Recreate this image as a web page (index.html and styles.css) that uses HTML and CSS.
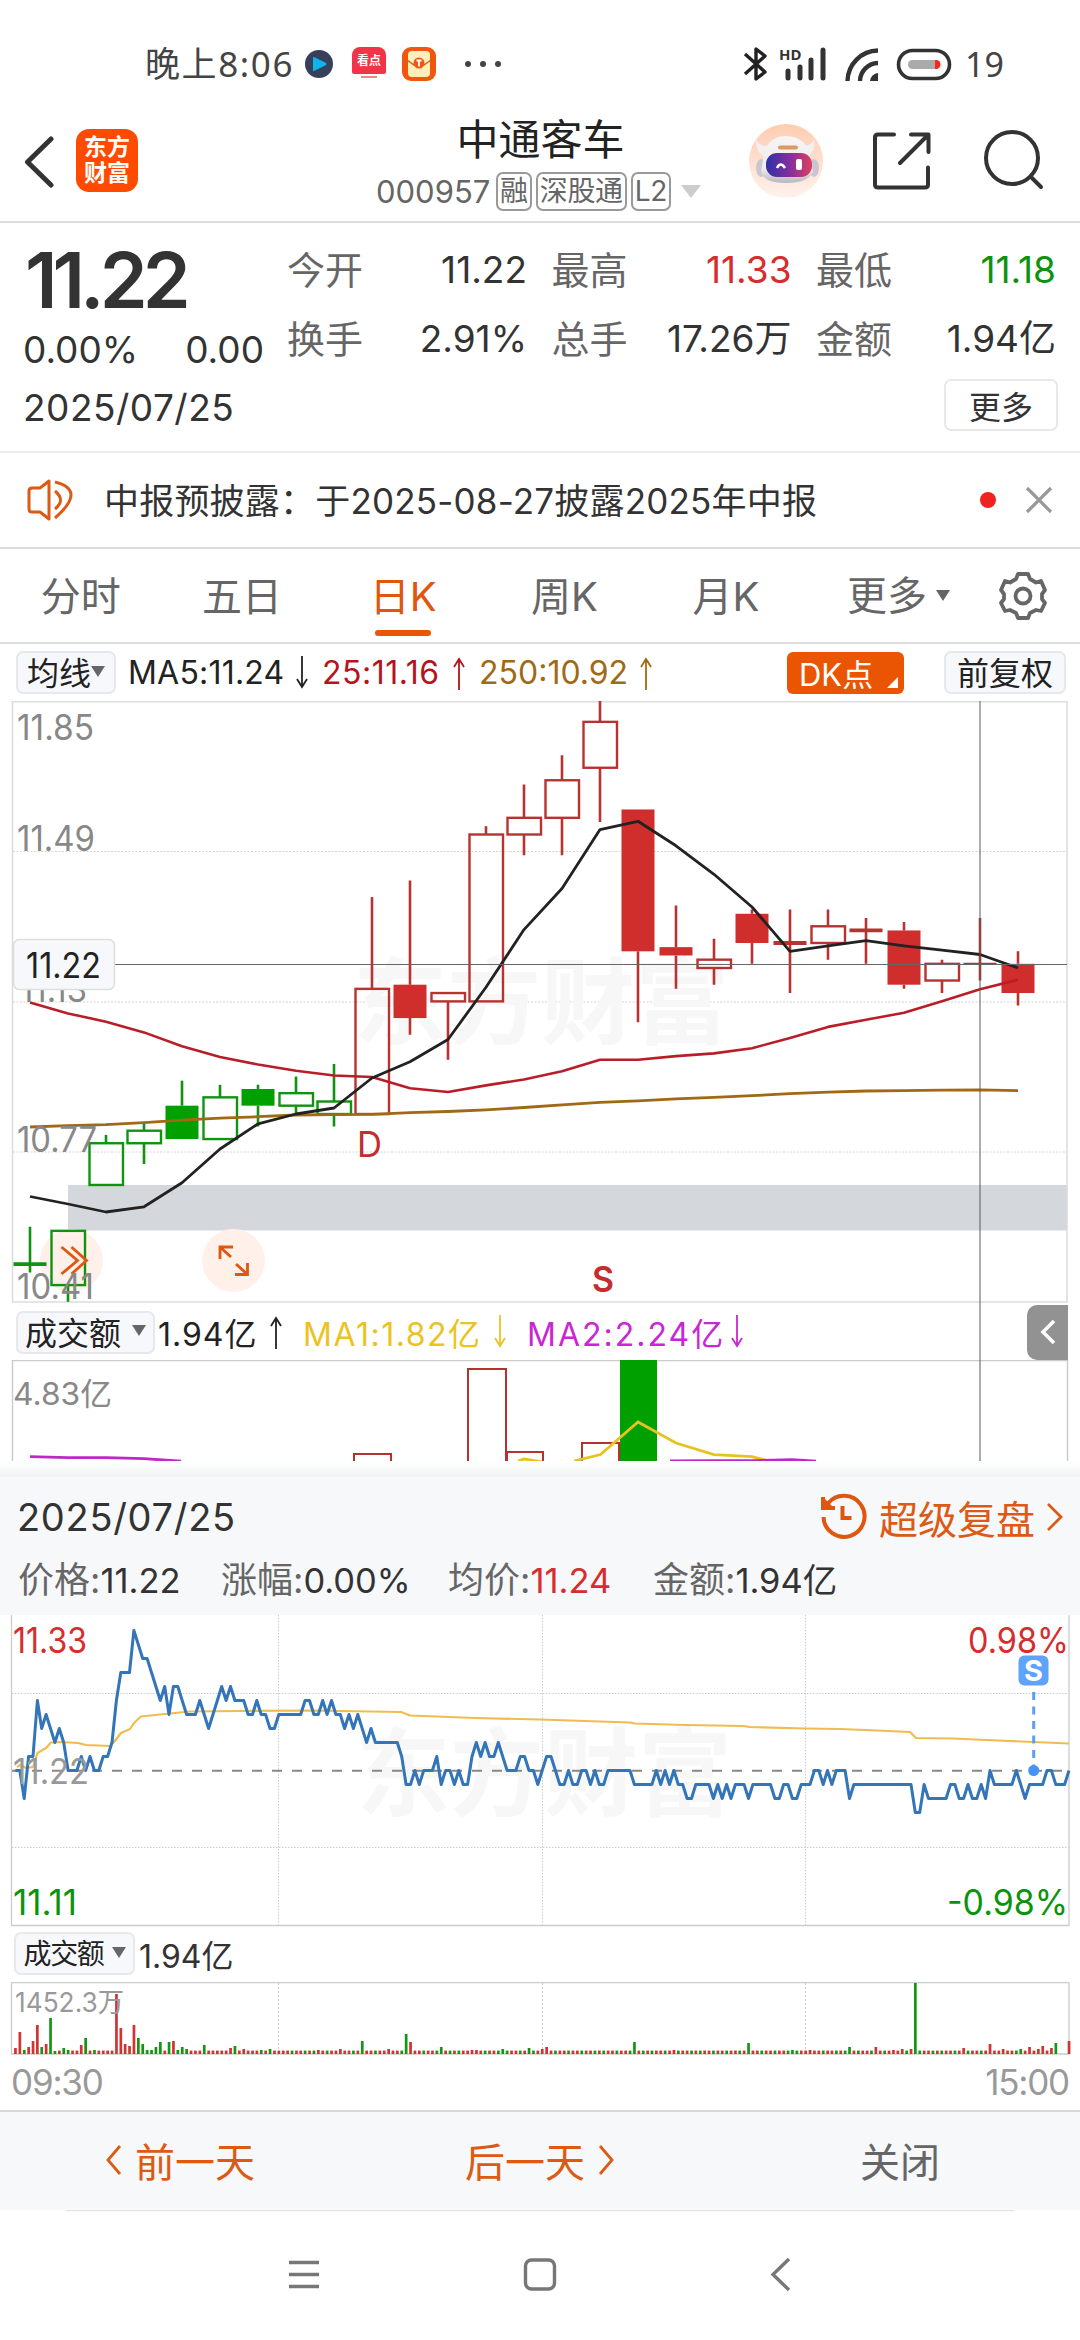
FILE: index.html
```html
<!DOCTYPE html>
<html lang="zh-CN">
<head>
    <meta charset="UTF-8">
    <meta name="viewport" content="width=device-width, initial-scale=1.0">
    <title>中通客车 000957</title>
    <link rel="stylesheet" href="styles.css">
</head>
<body>
    <div class="status-bar">
        <span class="time">晚上8:06</span>
        <svg class="app-play" width="28" height="28" viewBox="0 0 28 28"><circle cx="14" cy="14" r="14" fill="#37405a"/><path d="M8 7.500v13q0 1 1 .6l12-6.200q1-.9 0-1.800L9 7q-1-.4-1 .5z" fill="#10b4ec"/></svg>
        <span class="app-news"><b>看点</b><i></i></span>
        <svg class="app-mail" width="34" height="34" viewBox="0 0 34 34"><rect width="34" height="34" rx="9" fill="#f0560e"/><rect x="6" y="4" width="22" height="26" rx="4" fill="#ffeebb"/><path d="M5 13l7 5h10l7-5" fill="none" stroke="#c8641e" stroke-width="1.5"/><circle cx="17" cy="16" r="5.5" fill="#f0560e"/><path d="M14.5 13.5h5M17 13.5v6" stroke="#fff" stroke-width="1.8"/></svg>
        <span class="dots"><i></i><i></i><i></i></span>
        <svg class="system" width="230" height="40" viewBox="740 44 230 40">
            <path d="M744 54l20 18-9 7V49l9 7-20 18" fill="none" stroke="#222" stroke-width="3.4" stroke-linejoin="round"/>
            <text x="778" y="60" class="hd">HD</text>
            <path d="M787 71v7M799 67v11M810 60v18M822 50v28" stroke="#333" stroke-width="5" stroke-linecap="round"/>
            <g fill="none" stroke="#333" stroke-width="4.4"><path d="M846.500 81A31 31 0 0 1 877 50.500"/><path d="M859 81A18.500 18.500 0 0 1 877 63"/></g>
            <path d="M869 81a9 9 0 0 1 8-8v8z" fill="#333"/>
            <rect x="897.500" y="50.500" width="51" height="28" rx="14" fill="none" stroke="#333" stroke-width="3.6"/>
            <rect x="907" y="60" width="32" height="9" rx="4.500" fill="#aaa"/>
            <path d="M934 60h1a4.500 4.500 0 0 1 0 9h-1z" fill="#f22"/>
        </svg>
        <span class="battery">19</span>
    </div>

    <header>
        <div class="header-left">
            <svg width="30" height="52" viewBox="0 0 30 52"><path d="M27 3L3.500 26 27 49" fill="none" stroke="#333" stroke-width="5" stroke-linecap="round" stroke-linejoin="round"/></svg>
            <div class="logo">东方<br>财富</div>
        </div>
        <div class="header-title">
            <h1>中通客车</h1>
            <div class="stock-code"><span class="code">000957</span><i>融</i><i>深股通</i><i>L2</i><b class="triangle big"></b></div>
        </div>
        <svg class="header-icons" width="310" height="80" viewBox="740 120 310 80">
            <defs>
                <linearGradient id="peach" x1="0" y1="0" x2="0" y2="1"><stop offset="0" stop-color="#ffccb2"/><stop offset="1" stop-color="#fff2ec"/></linearGradient>
                <linearGradient id="visor"><stop offset="0" stop-color="#3030a8"/><stop offset=".55" stop-color="#8a2f9c"/><stop offset="1" stop-color="#e0405c"/></linearGradient>
                <linearGradient id="shell" x1="0" y1="0" x2="0" y2="1"><stop offset="0" stop-color="#f8f5f5"/><stop offset=".7" stop-color="#eeebee"/><stop offset="1" stop-color="#b9b5bd"/></linearGradient>
            </defs>
            <circle cx="786" cy="161" r="37" fill="url(#peach)"/>
            <path d="M756 139q2 7 12 7l-5 10q-8-6-7-17zM814 139q-2 7-11 7l5 10q8-6 6-17z" fill="#f3f0f2"/>
            <ellipse cx="761" cy="168" rx="5" ry="9" fill="#c9c6d2"/><ellipse cx="814" cy="168" rx="5" ry="9" fill="#c9c6d2"/>
            <path d="M763 160q2-23 22-24 23 0 26 24l2 12q-5 11-27 11t-25-11z" fill="url(#shell)"/>
            <rect x="778" y="145.500" width="20" height="4" rx="2" fill="#dc9a62"/>
            <rect x="766" y="153" width="46" height="24" rx="11" fill="url(#visor)"/>
            <path d="M777 168q3.500-7 8 0" fill="none" stroke="#fff" stroke-width="2.500"/><rect x="796" y="159" width="6" height="11" rx="2" fill="#fff"/>
            <g fill="none" stroke="#333" stroke-width="4" stroke-linecap="round" stroke-linejoin="round">
                <path d="M894 134.500h-16q-3 0-3 3v47q0 3 3 3h47q3 0 3-3v-17M911 134.500h17.500V152M900 163l28-28"/>
                <circle cx="1012" cy="158" r="26"/><path d="M1031 177l10 10"/>
            </g>
        </svg>
    </header>

    <section class="quote">
        <div class="price-box">
            <div class="price">11.22</div>
            <div class="change"><span>0.00%</span><span>0.00</span></div>
            <div class="date">2025/07/25</div>
        </div>
        <div class="quote-right">
            <div class="quote-grid">
                <div><label>今开</label><span>11.22</span></div>
                <div><label>最高</label><span class="red">11.33</span></div>
                <div><label>最低</label><span class="green">11.18</span></div>
                <div><label>换手</label><span>2.91%</span></div>
                <div><label>总手</label><span>17.26万</span></div>
                <div><label>金额</label><span>1.94亿</span></div>
            </div>
            <button class="more-button">更多</button>
        </div>
    </section>

    <section class="notice">
        <svg width="48" height="42" viewBox="0 0 48 42" fill="none" stroke="#dc5a14" stroke-width="3"><path d="M22 2v38l-9-7H5q-3 0-3-3V12q0-3 3-3h8z" stroke-linejoin="round"/><path d="M28 12q11 9 0 18M28 3q32 8 0 36"/></svg>
        <span class="notice-text">中报预披露：于2025-08-27披露2025年中报</span>
        <i class="red-dot"></i>
        <svg width="28" height="28" viewBox="0 0 28 28"><path d="M2 2l24 24M26 2L2 26" stroke="#999" stroke-width="3.200"/></svg>
    </section>

    <nav class="tabs">
        <a>分时</a>
        <a>五日</a>
        <a class="active">日K</a>
        <a>周K</a>
        <a>月K</a>
        <a class="tab-more">更多<b class="triangle"></b></a>
        <svg width="50" height="50" viewBox="-25 -25 50 50" fill="none" stroke="#666" stroke-width="3.800" stroke-linejoin="round"><path d="M-5-22H5L7-17 13-13.500 18-15 22-6 19-2V3L22 7 18 15 13 14 7 17 5 22H-5L-7 17-13 14-18 15-22 7-19 3V-2L-22-6-18-15-13-13.500-7-17Z"/><circle r="7.500"/></svg>
    </nav>

    <main class="k-area">
        <div class="indicator">
            <span class="tag ma-tag">均线<b class="triangle"></b></span>
            <span class="ma5">MA5:11.24</span><svg class="arrow down ma5"><use href="#arrow"/></svg>
            <span class="ma25">25:11.16</span><svg class="arrow ma25"><use href="#arrow"/></svg>
            <span class="ma250">250:10.92</span><svg class="arrow ma250"><use href="#arrow"/></svg>
            <span class="dk">DK点<i></i></span>
            <span class="tag">前复权</span>
        </div>
        <svg class="k-chart" id="k-chart" width="1080" height="602" viewBox="0 0 1080 602"></svg>
        <div class="indicator volume-row">
            <span class="tag vol-tag">成交额<b class="triangle"></b></span>
            <span class="vol">1.94亿</span><svg class="arrow vol"><use href="#arrow"/></svg>
            <span class="vma1">MA1:1.82亿</span><svg class="arrow down vma1"><use href="#arrow"/></svg>
            <span class="vma2">MA2:2.24亿</span><svg class="arrow down vma2"><use href="#arrow"/></svg>
            <span class="collapse"><svg width="16" height="26" viewBox="0 0 16 26"><path d="M14 2L3 13l11 11" fill="none" stroke="#fff" stroke-width="3.500"/></svg></span>
        </div>
        <svg class="vol-chart" width="1080" height="101" viewBox="0 0 1080 101">
            <path d="M12.500 101V.500H1067.500V101" fill="none" stroke="#ccc" stroke-width="1.500"/>
            <text x="13" y="45" class="axis small" textLength="99" lengthAdjust="spacingAndGlyphs">4.83亿</text>
            <g fill="#fff" stroke="#b43232" stroke-width="2">
                <path d="M354 102V94h37v8M468 102V9h38v93M507 102V92h36v10M582 102V83h37v19"/>
            </g>
            <rect x="620" width="37" height="101" fill="#00a000"/>
            <path d="M518 101l6-2 18 3M574 101l26.500-6.500L638 62l38 21 38 11.700 38 2 17 4.300" fill="none" stroke="#e6c31e" stroke-width="2.800"/>
            <path d="M30 96.700l38 1h38l38 1 37 2.500M670 101l44-.4h38l40-1 24 1.500" fill="none" stroke="#be28c8" stroke-width="2.800"/>
        </svg>
        <i class="cross-line"></i>
    </main>

    <section class="replay">
        <div class="replay-head">
            <span class="replay-date">2025/07/25</span>
            <a class="replay-link">
                <svg width="48" height="48" viewBox="0 0 48 48" fill="none" stroke="#e0560f" stroke-width="4"><path d="M3.500 24A20.500 20.500 0 1 0 8 10.500"/><path d="M3 4v11h12"/><path d="M3 4v11h11z" fill="#e0560f" stroke="none"/><path d="M22.500 13v12h9"/></svg>
                超级复盘
                <svg width="18" height="30" viewBox="0 0 18 30"><path d="M2 2l13 13L2 28" fill="none" stroke="#dc5a14" stroke-width="2.800"/></svg>
            </a>
        </div>
        <div class="replay-info">
            <span>价格:<b>11.22</b></span>
            <span>涨幅:<b>0.00%</b></span>
            <span>均价:<b class="red">11.24</b></span>
            <span>金额:<b>1.94亿</b></span>
        </div>
    </section>

    <svg class="minute-chart" id="minute-chart" width="1080" height="312" viewBox="0 0 1080 312"></svg>
    <div class="minute-row">
        <span class="tag minute-tag">成交额<b class="triangle"></b></span>
        <span>1.94亿</span>
    </div>
    <svg class="minute-volume" id="minute-volume" width="1080" height="73" viewBox="0 0 1080 73"></svg>
    <div class="hours"><span>09:30</span><span>15:00</span></div>

    <footer>
        <a><svg width="18" height="32" viewBox="0 0 18 32"><path d="M15 2L3 16l12 14" fill="none" stroke="#dc5a14" stroke-width="2.800"/></svg>前一天</a>
        <a>后一天<svg width="18" height="32" viewBox="0 0 18 32"><path d="M3 2l12 14L3 30" fill="none" stroke="#dc5a14" stroke-width="2.800"/></svg></a>
        <a class="close">关闭</a>
    </footer>
    <svg class="system-nav" width="1080" height="129" viewBox="0 0 1080 129" fill="none" stroke="#777" stroke-width="3.400">
        <path d="M66 .5H1014" stroke="#e3e3e3" stroke-width="1.500"/>
        <path d="M289 52.500h30M289 64.500h30M289 76.500h30"/>
        <rect x="525.500" y="50" width="29" height="29" rx="6"/>
        <path d="M789 49l-16 15.500L789 80"/>
    </svg>

    <svg class="defs" width="0" height="0"><symbol id="arrow" viewBox="0 0 14 34"><path d="M7 34V3M2 11l5-8 5 8" fill="none" stroke="currentColor" stroke-width="1.800"/></symbol></svg>

    <script src="chart.js"></script>
</body>
</html>
```
FILE: styles.css
```css
* {
    box-sizing: border-box;
}
body {
    margin: 0;
    width: 1080px;
    background-color: #fff;
    color: #333;
    font-family: Inter, "Noto Sans CJK SC", sans-serif;
    font-weight: 400;
    white-space: nowrap;
}
svg {
    display: block;
    flex: none;
}
i, em {
    font-style: normal;
}
.red {
    color: #d62d2d;
}
.green {
    color: #0c930c;
}
.triangle {
    display: inline-block;
    border-left: 7px solid transparent;
    border-right: 7px solid transparent;
    border-top: 11px solid #666;
}
.triangle.big {
    border-left-width: 10px;
    border-right-width: 10px;
    border-top-width: 13px;
    border-top-color: #ccc;
    margin-left: 6px;
}

/* status bar */
.status-bar {
    display: flex;
    align-items: center;
    height: 112px;
    padding: 16px 0 0 145px;
    font-family: "Noto Sans", "Noto Sans CJK SC", sans-serif;
}
.time {
    width: 160px;
    font-size: 35px;
    letter-spacing: 1.6px;
    line-height: 40px;
    color: #444;
}
.app-news {
    display: flex;
    flex-direction: column;
    align-items: center;
    width: 34px;
    height: 34px;
    margin: 0 16px 0 19px;
}
.app-news b {
    width: 34px;
    height: 27px;
    border-radius: 8px 8px 2px 2px;
    background-color: #f23446;
    color: #fff;
    font-size: 12px;
    line-height: 28px;
    text-align: center;
}
.app-news i {
    width: 16px;
    height: 2px;
    margin-top: 2px;
    background-color: #e88;
}
.dots {
    display: flex;
    gap: 9px;
    margin-left: 29px;
}
.dots i {
    width: 6px;
    height: 6px;
    border-radius: 50%;
    background-color: #444;
}
.system {
    margin-left: 240px;
}
.hd {
    font-size: 15px;
    font-weight: bold;
    fill: #333;
}
.battery {
    margin-left: -6px;
    font-size: 34px;
    color: #444;
}

/* header */
header {
    display: grid;
    grid-template-columns: 370px 370px 340px;
    height: 111px;
    border-bottom: 2px solid #ddd;
}
.header-left {
    display: flex;
    align-items: center;
    padding: 0 0 12px 24px;
}
.header-left svg {
    margin-top: 2px;
}
.logo {
    width: 62px;
    height: 63px;
    margin-left: 22px;
    padding-top: 5px;
    border-radius: 13px;
    background-color: #ff4a00;
    color: #fff;
    font-size: 23px;
    font-weight: bold;
    line-height: 26px;
    text-align: center;
}
.header-title h1 {
    width: 341px;
    margin: 0;
    padding-top: 1px;
    color: #222;
    font-size: 42px;
    font-weight: 400;
    line-height: 54px;
    text-align: center;
}
.stock-code {
    display: flex;
    align-items: center;
    gap: 4px;
    height: 48px;
    padding-left: 6px;
    color: #666;
}
.code {
    width: 116px;
    font-size: 31px;
}
.stock-code i {
    height: 39px;
    padding: 0 2px;
    border: 2px solid #999;
    border-radius: 7px;
    font-size: 28px;
    letter-spacing: -0.3px;
    line-height: 35px;
}
.header-icons {
    margin-top: 8px;
}

/* quote */
.quote {
    display: flex;
    height: 230px;
    padding: 0 22px 0 23px;
    border-bottom: 2px solid #ebebeb;
    font-size: 37px;
}
.price-box {
    width: 265px;
}
.price {
    margin: 12px 0 0 2px;
    font-size: 77px;
    font-weight: 600;
    line-height: 90px;
    letter-spacing: -5px;
}
.change {
    display: flex;
    justify-content: space-between;
    width: 241px;
    line-height: 50px;
}
.date {
    margin-top: 9px;
    line-height: 48px;
    letter-spacing: 0.5px;
}
.quote-right {
    flex: 1;
}
.quote-grid {
    display: grid;
    grid-template-columns: repeat(3, 240px);
    column-gap: 24.5px;
    row-gap: 13px;
    margin-top: 19px;
    line-height: 56px;
}
.quote-grid div {
    display: flex;
    justify-content: space-between;
}
.quote-grid label {
    color: #666;
    font-size: 38px;
}
.more-button {
    display: block;
    width: 114px;
    height: 52px;
    margin: 12px 0 0 657px;
    padding: 0;
    border: 2px solid #e8e8e8;
    border-radius: 7px;
    background-color: #fff;
    color: #333;
    font-family: inherit;
    font-size: 32px;
}

/* notice */
.notice {
    display: flex;
    align-items: center;
    height: 96px;
    padding-left: 27px;
    border-bottom: 2px solid #ddd;
}
.notice-text {
    width: 876px;
    margin: -3px 0 0 29px;
    font-size: 35px;
    letter-spacing: 0.2px;
}
.red-dot {
    width: 16px;
    height: 16px;
    margin-right: 29px;
    border-radius: 50%;
    background-color: #f02222;
}

/* tabs */
.tabs {
    display: flex;
    align-items: center;
    height: 95px;
    border-bottom: 2px solid #ddd;
    color: #666;
    font-size: 40px;
}
.tabs a {
    display: flex;
    flex-direction: column;
    align-items: center;
    width: 161.3px;
    height: 93px;
    line-height: 95px;
}
.tabs .active {
    color: #e0560f;
}
.tabs .active::after {
    content: "";
    width: 56px;
    height: 6px;
    margin-top: -14px;
    border-radius: 3px;
    background-color: #ea5504;
}
.tabs .tab-more {
    flex-direction: row;
    justify-content: center;
    gap: 9px;
    width: 192px;
    padding-right: 8px;
}

/* candle chart */
.k-area {
    position: relative;
}
.indicator {
    display: flex;
    align-items: center;
    height: 57px;
    padding-left: 16px;
    font-size: 32px;
}
.tag {
    display: flex;
    align-items: center;
    justify-content: center;
    height: 43px;
    padding-bottom: 3px;
    border: 2px solid #e6e8ec;
    border-radius: 7px;
    background-color: #f7f8fb;
    color: #222;
    font-size: 32px;
}
.ma-tag {
    width: 100px;
    margin-right: 12px;
}
.arrow {
    width: 14px;
    height: 34px;
}
.arrow.down {
    transform: rotate(180deg);
}
.ma5 {
    color: #222;
}
span.ma5 {
    width: 167px;
    letter-spacing: 0.2px;
}
.ma25 {
    color: #b4141e;
}
span.ma25 {
    width: 130px;
    margin-left: 13px;
    letter-spacing: 0.5px;
}
.ma250 {
    color: #a06914;
}
span.ma250 {
    width: 160px;
    margin-left: 13px;
}
.dk {
    display: flex;
    align-items: center;
    position: relative;
    width: 117px;
    height: 42px;
    margin: 0 40px 0 134px;
    padding: 0 0 1px 12px;
    border-radius: 6px;
    background-color: #ea5504;
    color: #fff;
    font-size: 31px;
}
.dk i {
    position: absolute;
    right: 6px;
    bottom: 6px;
    border-left: 11px solid transparent;
    border-bottom: 11px solid #fff;
}
.indicator .tag:last-child {
    width: 122px;
}
.volume-row {
    padding-top: 1px;
}
.vol-tag {
    width: 139px;
    margin-right: 3px;
    gap: 11px;
}
.vol {
    color: #222;
}
span.vol {
    width: 111px;
    letter-spacing: 1px;
}
.vma1 {
    color: #ebc31e;
}
span.vma1 {
    width: 190px;
    margin-left: 20px;
    letter-spacing: 1.5px;
}
.vma2 {
    color: #c828d2;
}
span.vma2 {
    width: 203px;
    margin-left: 20px;
    letter-spacing: 2px;
}
.collapse {
    display: flex;
    align-items: center;
    justify-content: center;
    width: 41px;
    height: 55px;
    margin-left: 283px;
    border-radius: 10px 0 0 10px;
    background-color: #929292;
}
.cross-line {
    position: absolute;
    left: 979px;
    top: 57px;
    width: 2px;
    height: 760px;
    background-color: rgba(90, 90, 90, 0.5);
}
.axis {
    font-size: 35px;
    fill: #888;
}
.axis.small {
    font-size: 31px;
}
.watermark {
    font-family: "Noto Sans CJK SC", sans-serif;
    font-size: 94px;
    font-weight: bold;
    fill: #f7f7f7;
}

/* replay panel */
.replay {
    height: 154px;
    padding-top: 16px;
    background: linear-gradient(#fff, #f1f2f3 16px, #f7f8fa 16px);
}
.replay-head {
    display: flex;
    justify-content: space-between;
    height: 80px;
    padding: 0 16px 0 17px;
    align-items: center;
    font-size: 39px;
}
.replay-date {
    font-size: 38px;
    letter-spacing: 0.7px;
}
.replay-link {
    display: flex;
    align-items: center;
    gap: 11px;
    color: #dc5a14;
}
.replay-info {
    display: grid;
    grid-template-columns: 203px 227px 205px 200px;
    padding-left: 18px;
    color: #666;
    font-size: 36px;
    line-height: 46px;
}
.replay-info b {
    color: #333;
    font-weight: 400;
    font-size: 34.5px;
}
.replay-info b.red {
    color: #d62d2d;
}
.minute-row {
    display: flex;
    align-items: center;
    height: 55px;
    padding: 0 0 2px 14px;
    font-size: 32px;
}
.minute-tag {
    width: 121px;
    margin-right: 4px;
    gap: 8px;
    font-size: 28px;
    letter-spacing: -1.3px;
}
.hours {
    display: flex;
    justify-content: space-between;
    height: 55px;
    padding: 0 11px;
    color: #999;
    font-size: 35px;
    letter-spacing: -1.2px;
    line-height: 54px;
}

footer {
    display: flex;
    align-items: center;
    height: 100px;
    padding-bottom: 2px;
    border-top: 2px solid #d6d8de;
    background-color: #f7f8fa;
    font-size: 40px;
}
footer a {
    display: flex;
    align-items: center;
    justify-content: center;
    gap: 12px;
    width: 360px;
    color: #dc5a14;
}
footer .close {
    color: #666;
}
.defs {
    position: absolute;
}
```
FILE: chart.js
```javascript
// [open, close, high, low, colour, filled]
const candles = [
    [10.50, 10.50, 10.59, 10.48, 'g'], [10.45, 10.58, 10.58, 10.41, 'g'], [10.69, 10.79, 10.81, 10.69, 'g'],
    [10.79, 10.82, 10.84, 10.74, 'g'], [10.88, 10.80, 10.94, 10.80, 'g', 1], [10.80, 10.90, 10.93, 10.80, 'g'],
    [10.92, 10.88, 10.93, 10.83, 'g', 1], [10.88, 10.91, 10.95, 10.86, 'g'], [10.86, 10.89, 10.98, 10.83, 'g'],
    [10.86, 11.16, 11.38, 10.86, 'r'], [11.17, 11.09, 11.42, 11.05, 'r', 1], [11.13, 11.15, 11.15, 10.99, 'r'],
    [11.13, 11.53, 11.55, 11.13, 'r'], [11.53, 11.57, 11.65, 11.48, 'r'], [11.57, 11.66, 11.72, 11.48, 'r'],
    [11.69, 11.80, 11.85, 11.56, 'r'], [11.59, 11.25, 11.59, 11.08, 'r', 1], [11.26, 11.24, 11.36, 11.16, 'r', 1],
    [11.21, 11.23, 11.28, 11.17, 'r'], [11.34, 11.27, 11.35, 11.22, 'r', 1], [11.27, 11.27, 11.35, 11.15, 'r'],
    [11.27, 11.31, 11.35, 11.23, 'r'], [11.30, 11.30, 11.33, 11.22, 'r'], [11.30, 11.17, 11.32, 11.16, 'r', 1],
    [11.18, 11.22, 11.23, 11.15, 'r'], [11.22, 11.22, 11.33, 11.18, 'r', 1], [11.22, 11.15, 11.25, 11.12, 'r', 1]
];
const ma5 = [495.5, 503, 511, 505.8, 481.7, 448, 422.8, 413, 407, 377, 360.7, 338.5, 286.3, 228.6, 187.5, 128.6, 120.3, 144.8, 173.3, 206, 250.4, 244.8, 239.7, 244.8, 249.2, 253.5, 267];
const ma25 = [301.4, 312.4, 320.7, 331.4, 345.3, 356, 363.5, 369.8, 374.5, 376, 387.2, 391, 384.4, 378.5, 370.2, 358.7, 358.7, 355.1, 352.4, 347.2, 337, 325.9, 318.8, 311.7, 300.2, 288.3, 278.8];
const ma250 = [426, 424.7, 423.6, 421.6, 419.2, 417.2, 415.7, 414, 413.7, 413.3, 411.7, 410.5, 408.9, 406.5, 403.8, 401.4, 399.8, 397.9, 396.3, 394.7, 392.7, 391.1, 390, 389.6, 389.2, 388.8, 389.6];

const color = { r: '#b93232', g: '#109410' };
const fill = { r: '#d02d2d', g: '#00a000' };
const kx = i => 30 + i * 38;
const ky = p => (11.85 - p) * 417.2;

function text(x, y, str, w, cls, attrs) {
    return `<text x="${x}" y="${y}" class="${cls}" textLength="${w}" lengthAdjust="spacingAndGlyphs" ${attrs || ''}>${str}</text>`;
}
function line(points, stroke, width) {
    return `<polyline points="${points}" fill="none" stroke="${stroke}" stroke-width="${width}" stroke-linejoin="round"/>`;
}

function drawK() {
    let s = '<path d="M12.5 .8H1067V601H12.5z" fill="none" stroke="#ddd" stroke-width="1.6"/>';
    [150.5, 301, 451].forEach(y => s += `<path d="M13 ${y}H1067" stroke="#d4d4d4" stroke-dasharray="2 1.5"/>`);
    s += text(353, 336, '东方财富', 376, 'watermark');
    s += '<rect x="68" y="484" width="999" height="45.5" fill="#d4d7dc"/>';
    s += '<g fill="#fff1e9"><circle cx="71.5" cy="559.5" r="31.5"/><circle cx="233.5" cy="559.5" r="31.5"/></g>';
    candles.forEach(([o, c, h, l, t, solid], i) => {
        const x = kx(i), top = ky(Math.max(o, c)), bottom = ky(Math.min(o, c));
        s += `<path d="M${x} ${ky(h)}V${top}M${x} ${bottom}V${ky(l)}" stroke="${color[t]}" stroke-width="2.6"/>`;
        if (o === c) {
            s += `<path d="M${x - 16.5} ${top}h33" stroke="${color[t]}" stroke-width="${solid ? 2 : 3.8}"/>`;
        } else if (solid) {
            s += `<rect x="${x - 16.5}" y="${top}" width="33" height="${bottom - top}" fill="${fill[t]}"/>`;
        } else {
            s += `<rect x="${x - 16.5}" y="${top}" width="33.5" height="${bottom - top}" fill="none" stroke="${color[t]}" stroke-width="2.4"/>`;
        }
    });
    s += line(ma250.map((y, i) => kx(i) + ',' + y).join(' '), '#a06914', 2.8);
    s += line(ma25.map((y, i) => kx(i) + ',' + y).join(' '), '#b91e28', 2.6);
    s += line(ma5.map((y, i) => kx(i) + ',' + y).join(' '), '#222', 2.8);
    s += '<path d="M61.500 546l16 13.500-16 13.500M71.500 546l15 13.500-15 13.500M231 556l-11-10M220 558v-12h13M236 563l11 10M235 573.500h12.500V562" fill="none" stroke="#e0560f" stroke-width="2.800"/>';
    s += text(17, 39, '11.85', 77, 'axis') + text(17, 149.5, '11.49', 78, 'axis') + text(20, 301, '11.13', 67, 'axis');
    s += text(17, 450.5, '10.77', 80, 'axis') + text(17, 598, '10.41', 77, 'axis');
    s += text(357, 455.5, 'D', 25, 'axis', 'style="fill:#c32d2d"');
    s += text(592, 590.5, 'S', 22, 'axis', 'style="fill:#c32d2d;font-weight:600"');
    s += '<path d="M114 263.500H1067" stroke="#666"/>';
    s += '<rect x="13.500" y="238.500" width="101" height="50" rx="6" fill="#f7f8fb" stroke="#ddd" stroke-width="1.500"/>';
    s += text(26, 277, '11.22', 75, 'axis', 'style="fill:#222"');
    document.getElementById('k-chart').innerHTML = s;
}

// minute, ticks from the previous close
const minutes = [
    0,0, 1,0, 2,-2, 3,1, 4,1, 5,5, 6,3, 7,4, 9,2, 10,3, 11,2, 12,0, 14,0, 15,1, 16,0, 17,1, 18,0, 19,0, 20,1, 21,1, 22,2, 23,5, 24,7, 26,7, 27,10, 28,9, 29,8, 30,8,
    33,5, 34,6, 35,4, 36,6, 37,6, 39,4, 41,4, 42,5, 44,3, 47,6, 48,5, 49,6, 50,5, 52,5, 53,4, 54,4, 55,5, 56,4, 57,4, 58,3, 59,3, 60,4, 65,4, 66,5, 67,5, 68,4, 69,4, 70,5, 71,4, 72,5, 73,4, 74,4,
    75,3, 76,4, 77,3, 78,4, 80,2, 81,3, 82,2, 87,2, 88,1, 89,-1, 90,-1, 91,0, 92,-1, 93,0, 95,0, 96,1, 97,-1, 98,0, 99,0, 100,-1, 101,0, 102,-1, 103,-1, 104,1, 105,2, 106,1, 107,2, 108,1, 109,1, 110,2,
    112,0, 114,0, 115,1, 116,1, 117,0, 118,0, 119,-1, 120,0, 121,1, 122,1, 124,-1, 125,-1, 126,0, 127,-1, 128,-1, 129,0, 130,0, 131,-1, 132,0, 133,-1, 134,-1, 135,0, 140,0, 141,-1, 145,-1, 146,0, 147,-1, 148,0, 149,-1, 150,0,
    151,-1, 152,-1, 153,-2, 154,-2, 155,-1, 158,-1, 159,-2, 160,-1, 161,-2, 162,-1, 163,-2, 164,-1, 166,-1, 167,-2, 168,-1, 172,-1, 173,-2, 174,-2, 175,-1, 176,-1, 177,-2, 178,-2, 179,-1, 181,-1, 182,0, 183,0, 184,-1, 185,0, 186,-1, 187,0, 189,0,
    190,-2, 191,-1, 204,-1, 205,-3, 206,-3, 207,-1, 208,-2, 212,-2, 213,-1, 214,-1, 215,-2, 216,-2, 217,-1, 218,-2, 219,-2, 220,-1, 221,-2, 222,0, 223,-1, 227,-1, 228,0, 230,-2, 231,-1, 234,-1, 235,0, 236,0, 237,-1, 239,-1, 240,0
];
const average = '17,152 20,150 26,153 33,152 37.5,138 46,133 51,127.500 60,127 78,128 86,130 110,131 114,127 121,118 130,114 134,108 141,101.500 155,100 190,96.500 241,96 310,95.500 401,97 410,100.500 475,103 540,104.500 630,107.500 635,108.500 685,110 743,111 750,112 805,113.500 840,114 877,115.500 910,117 916,123 953,123.500 998,125.500 1069,128.500';

function drawMinutes() {
    let s = '<path d="M11.5 0V310.5H1069V0" fill="none" stroke="#ccc" stroke-width="1.3"/>';
    s += text(356, 193, '东方财富', 376, 'watermark', 'style="font-size:96px"');
    s += '<path d="M278.500 0V310M542.500 0V310M805.500 0V310M12 78.500H1069M12 232.500H1069" stroke="#ccc" stroke-dasharray="1.500 1.500"/>';
    s += '<path d="M12 155.700H1069" stroke="#888" stroke-width="2" stroke-dasharray="10 10"/>';
    s += text(13, 38, '11.33', 74, 'axis', 'style="fill:#d62d2d"');
    s += text(13, 299.5, '11.11', 64, 'axis', 'style="fill:#0c930c"');
    s += text(968, 38, '0.98%', 101, 'axis', 'style="fill:#d62d2d"');
    s += text(947, 299.5, '-0.98%', 121, 'axis', 'style="fill:#0c930c"');
    s += line(average, '#f0bc50', 2.2);
    let points = '';
    for (let i = 0; i < minutes.length; i += 2) {
        points += (15.4 + minutes[i] * 4.39).toFixed(1) + ',' + (155.5 - minutes[i + 1] * 14) + ' ';
    }
    s += line(points, '#3375b8', 3);
    s += text(13, 168.5, '11.22', 76, 'axis', 'style="fill:#999"');
    s += '<path d="M1033.700 77V155" stroke="#5a9ff0" stroke-width="3" stroke-dasharray="8 6.500"/><circle cx="1033.700" cy="155.500" r="5.500" fill="#4593f5"/>';
    s += '<rect x="1018.500" y="40.500" width="30" height="30" rx="6" fill="#5fa2fa"/>';
    s += text(1024, 66, 'S', 19, 'axis', 'style="fill:#fff;font-size:29px;font-weight:700"');
    document.getElementById('minute-chart').innerHTML = s;
}

// minute: bar height, negative is green
const spikes = {
    0: 6, 1: 22, 2: -4, 3: 7, 4: 13, 5: 29, 6: -7, 7: 10, 8: -36, 9: -3, 11: -6, 12: -4, 15: 9, 16: -16, 18: -4, 23: 60, 24: 26, 25: 10, 26: 8, 27: 29, 28: -16, 29: -10, 30: -4, 31: -4, 32: -7, 33: -12, 35: -12, 36: 13, 37: -4, 38: -7, 39: -5,
    43: -9, 49: 6, 50: -8, 52: 5, 56: -4, 58: -5, 69: 4, 74: 5, 79: -13, 85: 5, 89: -20, 90: 12, 97: -7, 104: 4, 105: 4, 111: -5, 117: -6, 120: 5, 121: 7, 141: -12, 150: 4, 167: -11, 177: -4, 181: 4, 190: -7, 196: 7, 200: 4, 202: 5, 204: 5, 205: -71,
    216: 6, 222: 10, 225: 5, 229: -5, 231: 7, 233: 5, 234: 8, 236: 6, 237: -11, 238: 0, 239: 0, 240: 13
};
function drawVolume() {
    let s = '<path d="M11.5 .7H1069V72H11.5z" fill="none" stroke="#ccc" stroke-width="1.300"/>';
    s += '<path d="M278.500 1V72M542.500 1V72M805.500 1V72" stroke="#ccc" stroke-dasharray="2 2"/>';
    for (let m = 0; m <= 240; m++) {
        let v = spikes[m];
        if (v === undefined) v = m > 60 && (m * 7 % 11 < 4) ? -3.4 : 3.4;
        s += `<rect x="${(14.1 + m * 4.39).toFixed(1)}" y="${72 - Math.abs(v)}" width="2.7" height="${Math.abs(v)}" fill="${v > 0 ? '#d23232' : '#149614'}"/>`;
    }
    s += text(15, 30, '1452.3万', 109, 'axis', 'style="fill:#999;font-size:27px"');
    document.getElementById('minute-volume').innerHTML = s;
}

drawK();
drawMinutes();
drawVolume();
```
